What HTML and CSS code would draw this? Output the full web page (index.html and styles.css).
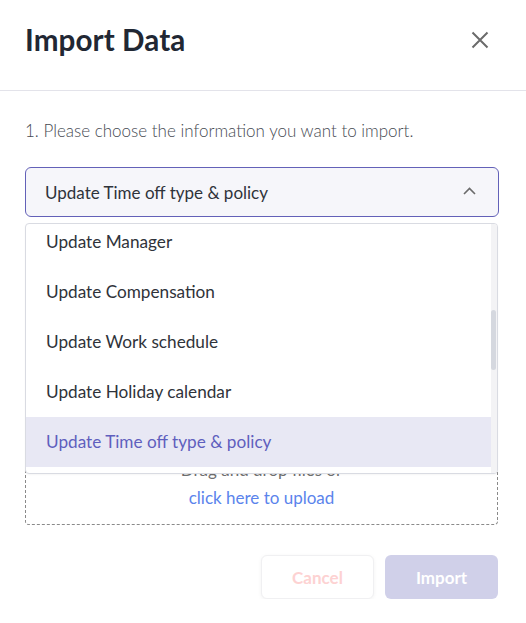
FILE: index.html
```html
<!DOCTYPE html>
<html>
<head>
<meta charset="utf-8">
<link rel="stylesheet" href="styles.css">
</head>
<body>
<div class="modal">
  <div class="header">
    <h1 class="title">Import Data</h1>
    <button class="close" aria-label="Close">
      <svg width="18" height="18" viewBox="0 0 18 18"><path d="M1.5 1.5 L16.5 16.5 M16.5 1.5 L1.5 16.5" stroke="#6b6b6b" stroke-width="2" fill="none"/></svg>
    </button>
  </div>
  <div class="content">
    <p class="step">1. Please choose the information you want to import.</p>
    <div class="field">
      <div class="select">
        <span class="select-value">Update Time off type &amp; policy</span>
        <svg class="chevron" width="13" height="8" viewBox="0 0 13 8"><path d="M1 7 L6.5 1.5 L12 7" stroke="#6b6b6b" stroke-width="1.6" fill="none"/></svg>
      </div>
      <div class="dropzone">
        <span class="dz-text">Drag and drop files or</span>
        <span class="dz-link">click here to upload</span>
      </div>
      <div class="menu">
        <ul class="options">
          <li class="option">Update Manager</li>
          <li class="option">Update Compensation</li>
          <li class="option">Update Work schedule</li>
          <li class="option">Update Holiday calendar</li>
          <li class="option selected">Update Time off type &amp; policy</li>
        </ul>
        <div class="scrollbar"><div class="thumb"></div></div>
      </div>
    </div>
    <div class="actions">
      <button class="btn btn-cancel">Cancel</button>
      <button class="btn btn-import">Import</button>
    </div>
  </div>
</div>
</body>
</html>
```
FILE: styles.css
```css
* { box-sizing: border-box; }
html, body { margin: 0; padding: 0; background: #fff; }
body { font-family: Lato, "Liberation Sans", sans-serif; color: #2b2f38; }

.modal { width: 526px; }

.header {
  height: 91px;
  border-bottom: 1px solid #e3e3ea;
  display: flex;
  align-items: center;
  justify-content: space-between;
  padding: 0 37px 12px 25px;
}
.title {
  margin: 0;
  font-size: 29.6px;
  font-weight: 700;
  color: #212733;
  letter-spacing: 0.1px;
}
.close {
  border: 0;
  background: none;
  padding: 0;
  width: 18px;
  height: 18px;
  display: flex;
  margin-top: 2px;
}

.content { padding: 29px 28px 0 25px; }

.step {
  margin: 0;
  font-size: 17px;
  line-height: 22px;
  color: #474b53;
  font-weight: 300;
}

.field { position: relative; margin-top: 25px; }

.select {
  height: 50px;
  border: 1px solid #6361b8;
  border-radius: 6px;
  background: #f6f6fa;
  display: flex;
  align-items: center;
  justify-content: space-between;
  padding: 0 22px 0 19px;
  margin-right: -1px;
}
.select-value { font-size: 17px; color: #2f333a; }
.chevron { margin-top: -3px; }

.dropzone {
  margin-top: 18px;
  height: 290px;
  border: 1px dashed #8a8a8a;
  border-radius: 4px;
  display: flex;
  flex-direction: column;
  align-items: center;
  justify-content: flex-end;
  padding-bottom: 12px;
  font-size: 17px;
  line-height: 28px;
}
.dz-text { color: #6f6f6f; }
.dz-link { color: #5b84ec; }

.menu {
  position: absolute;
  left: 0;
  right: 0;
  top: 56px;
  height: 251px;
  border: 1px solid #d9dbe2;
  border-radius: 4px;
  background: #fff;
  overflow: hidden;
  box-shadow: 0 1px 2px rgba(0,0,0,0.04);
}
.options {
  list-style: none;
  margin: -7px 0 0 0;
  padding: 0;
  margin-right: 6px;
}
.option {
  height: 50px;
  line-height: 50px;
  padding-left: 20px;
  font-size: 17.2px;
  color: #2f333a;
}
.option.selected { background: #e8e8f4; color: #5f5fbe; }

.scrollbar {
  position: absolute;
  top: 0;
  right: 0;
  bottom: 0;
  width: 6px;
  background: #f3f3f5;
}
.thumb {
  position: absolute;
  left: 0;
  right: 1px;
  top: 86px;
  height: 60px;
  background: #d5d8df;
  border-radius: 3px;
}

.actions {
  display: flex;
  justify-content: flex-end;
  gap: 11px;
  margin-top: 30px;
}
.btn {
  height: 44px;
  border-radius: 6px;
  font-family: Lato, "Liberation Sans", sans-serif;
  font-size: 17px;
  font-weight: 700;
  cursor: pointer;
}
.btn-cancel {
  width: 113px;
  background: #fff;
  border: 1px solid #f0f0f2;
  color: #fdd2d2;
  box-shadow: 0 1px 4px rgba(0,0,0,0.05);
}
.btn-import {
  width: 113px;
  background: #d0d0e9;
  border: 0;
  color: #fff;
}
```
